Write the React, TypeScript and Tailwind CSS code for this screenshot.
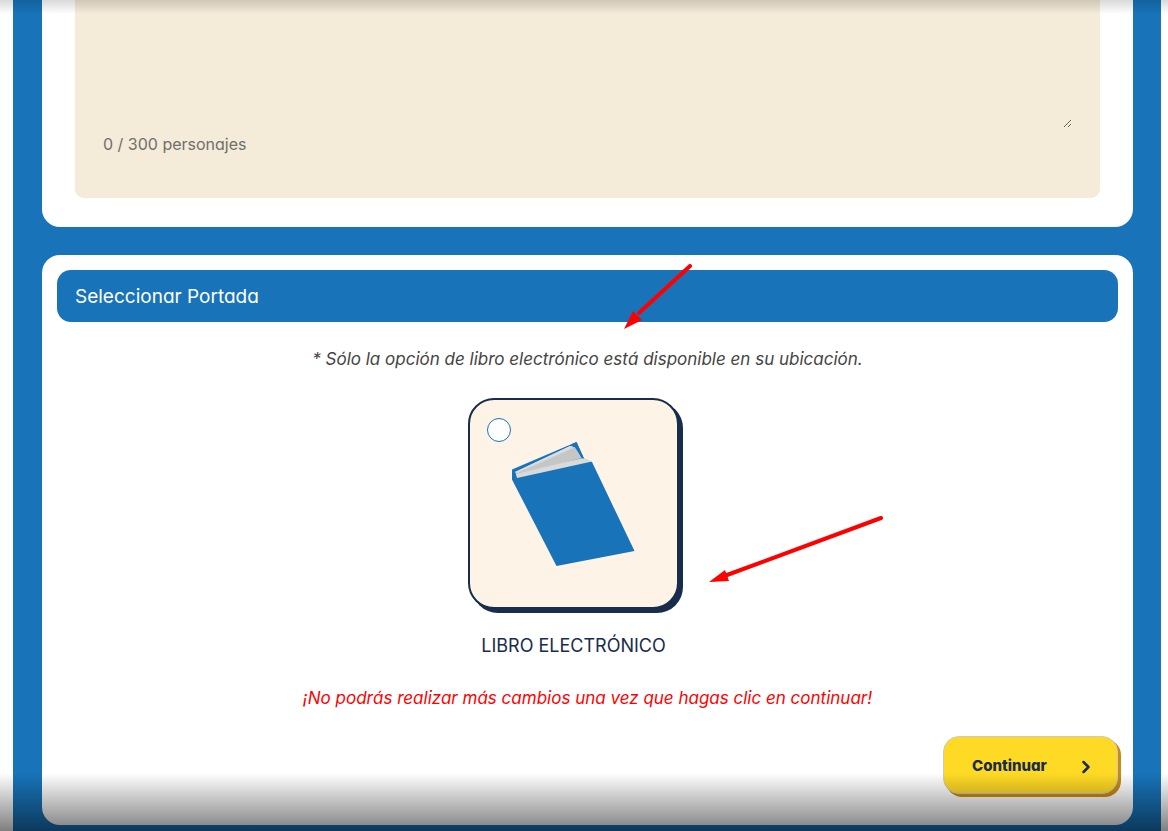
import { ChevronRight } from 'lucide-react';

const App = () => {
  return (
    <main className="relative bg-white pl-[13px] pr-[7px] font-['Inter',sans-serif] [font-feature-settings:'cv11']">
      <div className="bg-[#1873b9] pr-7 pb-[6px] pl-[29px]">
        <DescriptionCard />
        <CoverCard />
      </div>
      <div className="pointer-events-none absolute inset-x-0 top-0 h-[14px] bg-linear-to-b from-black/15 to-transparent" />
      <div className="pointer-events-none absolute inset-x-0 bottom-0 h-[58px] bg-linear-to-b from-transparent to-black/50" />
    </main>
  );
};

const DescriptionCard = () => (
  <section className="rounded-b-[18px] bg-white px-[33px] pb-[29px]">
    <div className="rounded-b-[9px] bg-[#f4ebd8] px-7 pb-[42px]">
      <textarea
        aria-label="personajes"
        aria-describedby="counter"
        maxLength={300}
        className="block h-32 w-full resize bg-transparent outline-none"
      />
      <p id="counter" className="pt-1 text-[16px] leading-6 text-[#6f6f6d]">
        0 / 300 personajes
      </p>
    </div>
  </section>
);

const CoverCard = () => (
  <section className="mt-7 flex flex-col rounded-[18px] bg-white px-[15px] pt-[15px] pb-[31px]">
    <div className="relative">
      <h2 className="rounded-[14px] bg-[#1873b9] px-[18px] pt-[13px] pb-[11px] text-[19px] leading-7 text-white">
        Seleccionar Portada
      </h2>
      <svg
        className="pointer-events-none absolute -top-[6px] left-1/2 ml-[36px] h-[66px] w-[70px]"
        viewBox="0 0 70 66"
        aria-hidden="true"
      >
        <path d="M66 2L15 49" stroke="#ff0000" strokeWidth="4" strokeLinecap="round" />
        <path d="M0 65L9 47L18 56Z" fill="#ff0000" />
      </svg>
    </div>
    <p className="mt-[25px] text-center text-[17px] leading-6 text-[#444444] italic">
      * Sólo la opción de libro electrónico está disponible en su ubicación.
    </p>
    <div className="relative mt-[27px] mr-7 flex flex-col items-center self-center">
      <label
        htmlFor="ebook"
        className="flex h-[211px] w-[211px] cursor-pointer items-start rounded-[26px] border-2 border-[#182c4b] bg-[#fdf3e7] p-[17px] pt-[18px] shadow-[4px_4px_0_#182c4b]"
      >
        <input
          id="ebook"
          type="radio"
          name="cover"
          aria-labelledby="ebook-name"
          className="h-6 w-6 shrink-0 appearance-none rounded-full border border-[#1873b9] bg-white checked:border-8"
        />
        <BookIcon />
      </label>
      <span id="ebook-name" className="mt-[23px] text-[18px] leading-7 text-[#182c4b]">
        LIBRO ELECTRÓNICO
      </span>
      <svg
        className="pointer-events-none absolute top-[116px] left-[241px] h-[70px] w-[176px]"
        viewBox="0 0 176 70"
        aria-hidden="true"
      >
        <path d="M172 4L18 61" stroke="#ff0000" strokeWidth="4" strokeLinecap="round" />
        <path d="M0 68L16 56L20 67Z" fill="#ff0000" />
      </svg>
    </div>
    <p className="mt-[26px] text-center text-[17px] leading-6 text-[#ff0000] italic">
      ¡No podrás realizar más cambios una vez que hagas clic en continuar!
    </p>
    <button
      type="button"
      className="mt-[26px] flex h-[58px] w-[175px] items-center justify-between self-end rounded-[16px] border border-[#c9c9c9] bg-[#ffda24] pt-[3px] pr-[21px] pl-7 text-[15px] font-extrabold text-[#182c4b] shadow-[3px_3px_0_#c98b17]"
    >
      Continuar
      <ChevronRight size={20} strokeWidth={3} />
    </button>
  </section>
);

const BookIcon = () => (
  <svg className="mt-6 ml-px h-[124px] w-[123px] shrink-0" viewBox="0 0 123 124" aria-hidden="true">
    <path d="M0 27.5L64.5 0L72 16.5L80 20L122.5 109L44.5 124L0 37.5Z" fill="#1873b9" />
    <path d="M3 30L58 4L62 4L70 16L5 34Z" fill="#c6c6c6" />
    <path d="M3 30L58 4L61 6L5 31Z" fill="#d8dde2" />
    <path d="M4 32L71 16L80 19.5L5 36Z" fill="#dadada" />
    <path d="M60 2L64.5 0L72 16.5L69.5 16L64 5L61 5Z" fill="#1873b9" />
  </svg>
);

export default App;
